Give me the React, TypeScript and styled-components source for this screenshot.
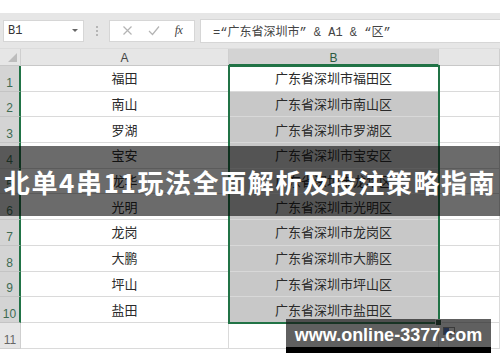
import React from "react";
import styled, { createGlobalStyle } from "styled-components";

const Global = createGlobalStyle`
  html, body { margin: 0; padding: 0; background: #ffffff; }
  body { width: 500px; height: 362px; overflow: hidden; }
`;

const CJK = `"Noto Sans CJK SC", "Noto Sans", sans-serif`;

const Page = styled.div`
  position: relative;
  width: 500px;
  height: 362px;
  background: #ffffff;
  padding-top: 13px;
  box-sizing: border-box;
  overflow: hidden;
`;

const Toolbar = styled.div`
  display: flex;
  align-items: center;
  height: 36px;
  padding-left: 3px;
  background: #e6e6e6;
  box-sizing: border-box;
  border-bottom: 1px solid #dcdcdc;
`;

const NameBox = styled.div`
  display: flex;
  align-items: center;
  justify-content: space-between;
  width: 81px;
  height: 22px;
  padding: 0 5px 0 4px;
  box-sizing: border-box;
  background: #ffffff;
  border: 1px solid #d6d6d6;
  font-family: "Liberation Mono", monospace;
  font-size: 12px;
  color: #333;
`;

const Caret = styled.span`
  width: 0;
  height: 0;
  border-left: 3px solid transparent;
  border-right: 3px solid transparent;
  border-top: 3px solid #666;
`;

const Grip = styled.div`
  display: flex;
  flex-direction: column;
  gap: 2px;
  margin: 0 11px 0 12px;
  span {
    width: 2px;
    height: 2px;
    background: #b5b5b5;
  }
`;

const FnBox = styled.div`
  display: flex;
  align-items: center;
  justify-content: space-around;
  width: 86px;
  height: 22px;
  box-sizing: border-box;
  background: #ffffff;
  border: 1px solid #d6d6d6;
  padding: 0 4px;
`;

const Fx = styled.span`
  font-family: "Liberation Serif", serif;
  font-style: italic;
  font-size: 12px;
  color: #444;
  letter-spacing: -0.5px;
`;

const FormulaInput = styled.div`
  flex: 1;
  height: 22px;
  margin-left: 5px;
  display: flex;
  align-items: center;
  padding-left: 12px;
  background: #ffffff;
  border: 1px solid #d6d6d6;
  border-right: none;
  font-family: "Liberation Mono", ${CJK};
  font-size: 12px;
  color: #444;
  white-space: pre;
`;

const Sheet = styled.div`
  display: grid;
  grid-template-columns: 21px 208px 210px 1fr;
  grid-template-rows: 17px repeat(11, 25.7px);
`;

type Pos = { $r: number; $c: number };

const Corner = styled.div<Pos>`
  grid-row: ${(p) => p.$r};
  grid-column: ${(p) => p.$c};
  background: #e6e6e6;
  border-right: 1px solid #cfcfcf;
  border-bottom: 1px solid #c8c8c8;
  box-sizing: border-box;
  position: relative;
  &::after {
    content: "";
    position: absolute;
    right: 3px;
    bottom: 3px;
    border-left: 9px solid transparent;
    border-bottom: 9px solid #bdbdbd;
  }
`;

const ColHead = styled.div<Pos & { $sel?: boolean }>`
  grid-row: ${(p) => p.$r};
  grid-column: ${(p) => p.$c};
  display: flex;
  align-items: center;
  justify-content: center;
  box-sizing: border-box;
  background: ${(p) => (p.$sel ? "#d3d3d3" : "#e6e6e6")};
  border-right: 1px solid #cfcfcf;
  border-bottom: ${(p) => (p.$sel ? "2px solid #217346" : "1px solid #c8c8c8")};
  font-family: "Liberation Sans", sans-serif;
  font-size: 12px;
  color: ${(p) => (p.$sel ? "#2b5a40" : "#444")};
  padding-top: 2px;
`;

const RowHead = styled.div<Pos & { $sel?: boolean }>`
  grid-row: ${(p) => p.$r};
  grid-column: ${(p) => p.$c};
  display: flex;
  align-items: flex-end;
  justify-content: center;
  box-sizing: border-box;
  padding-bottom: 1px;
  background: ${(p) => (p.$sel ? "#d4d4d4" : "#e6e6e6")};
  border-bottom: 1px solid ${(p) => (p.$sel ? "#c4c4c4" : "#d0d0d0")};
  border-right: ${(p) => (p.$sel ? "2px solid #217346" : "1px solid #cfcfcf")};
  font-family: "Liberation Sans", sans-serif;
  font-size: 12px;
  color: ${(p) => (p.$sel ? "#3e6b52" : "#666")};
`;

const Cell = styled.div<Pos & { $fill?: boolean }>`
  grid-row: ${(p) => p.$r};
  grid-column: ${(p) => p.$c};
  display: flex;
  align-items: center;
  justify-content: center;
  box-sizing: border-box;
  background: ${(p) => (p.$fill ? "#c8c8c8" : "#ffffff")};
  border-right: 1px solid #dadada;
  border-bottom: 1px solid ${(p) => (p.$fill ? "#d8d8d8" : "#dadada")};
  font-family: ${CJK};
  font-size: 13px;
  color: #2a2a2a;
  padding-bottom: 1px;
`;

const Selection = styled.div`
  grid-column: 3;
  grid-row: 2 / span 10;
  margin: -1px;
  border: 2px solid #217346;
  position: relative;
  pointer-events: none;
`;

const FillHandle = styled.span`
  position: absolute;
  right: -4px;
  bottom: -4px;
  width: 5px;
  height: 5px;
  background: #1d4a30;
  border: 1px solid #ffffff;
`;

const QuickIcon = styled.span`
  position: absolute;
  left: 443px;
  top: 327px;
  width: 10px;
  height: 6px;
  border: 1px solid #8a8a8a;
  background: linear-gradient(90deg, #4a6fc0 0 50%, #ffffff 50%);
`;

const Band = styled.div`
  position: absolute;
  left: 0;
  top: 146px;
  width: 500px;
  height: 70px;
  display: flex;
  align-items: center;
  justify-content: center;
  background: rgba(0, 0, 0, 0.58);
`;

const Title = styled.h1`
  margin: 0;
  font-family: ${CJK};
  font-weight: 700;
  font-size: 26px;
  letter-spacing: 1.6px;
  color: #ffffff;
  white-space: nowrap;
`;

const Watermark = styled.div`
  position: absolute;
  left: 286px;
  top: 319px;
  width: 205px;
  height: 34px;
  display: flex;
  flex-direction: column;
`;

const WmText = styled.div`
  height: 28px;
  display: flex;
  align-items: center;
  justify-content: center;
  background: rgba(20, 20, 20, 0.68);
  font-family: "Liberation Sans", sans-serif;
  font-weight: 700;
  font-size: 18px;
  color: #ffffff;
  padding-top: 4px;
  box-sizing: border-box;
`;

const WmStrip = styled.div`
  flex: 1;
  background: #000000;
`;

const districts = ["福田", "南山", "罗湖", "宝安", "龙华", "光明", "龙岗", "大鹏", "坪山", "盐田"];

export default function App() {
  return (
    <Page>
      <Global />
      <Toolbar>
        <NameBox>
          <span>B1</span>
          <Caret />
        </NameBox>
        <Grip>
          <span />
          <span />
          <span />
        </Grip>
        <FnBox>
          <svg width="11" height="11" viewBox="0 0 11 11">
            <path d="M1.5 1.5 L9.5 9.5 M9.5 1.5 L1.5 9.5" stroke="#b4b4b4" strokeWidth="1.2" fill="none" />
          </svg>
          <svg width="12" height="11" viewBox="0 0 12 11">
            <path d="M1 6 L4.5 9.5 L11 1.5" stroke="#b4b4b4" strokeWidth="1.2" fill="none" />
          </svg>
          <Fx>fx</Fx>
        </FnBox>
        <FormulaInput>{"=“广东省深圳市” & A1 & “区”"}</FormulaInput>
      </Toolbar>
      <Sheet>
        <Corner $r={1} $c={1} />
        <ColHead $r={1} $c={2}>A</ColHead>
        <ColHead $r={1} $c={3} $sel>B</ColHead>
        <ColHead $r={1} $c={4} />
        {districts.map((d, i) => (
          <React.Fragment key={d}>
            <RowHead $r={i + 2} $c={1} $sel>{i + 1}</RowHead>
            <Cell $r={i + 2} $c={2}>{d}</Cell>
            <Cell $r={i + 2} $c={3} $fill={i > 0}>{`广东省深圳市${d}区`}</Cell>
            <Cell $r={i + 2} $c={4} />
          </React.Fragment>
        ))}
        <RowHead $r={12} $c={1}>11</RowHead>
        <Cell $r={12} $c={2} />
        <Cell $r={12} $c={3} />
        <Cell $r={12} $c={4} />
        <Selection>
          <FillHandle />
        </Selection>
      </Sheet>
      <QuickIcon />
      <Band>
        <Title>北单4串11玩法全面解析及投注策略指南</Title>
      </Band>
      <Watermark>
        <WmText>www.online-3377.com</WmText>
        <WmStrip />
      </Watermark>
    </Page>
  );
}
